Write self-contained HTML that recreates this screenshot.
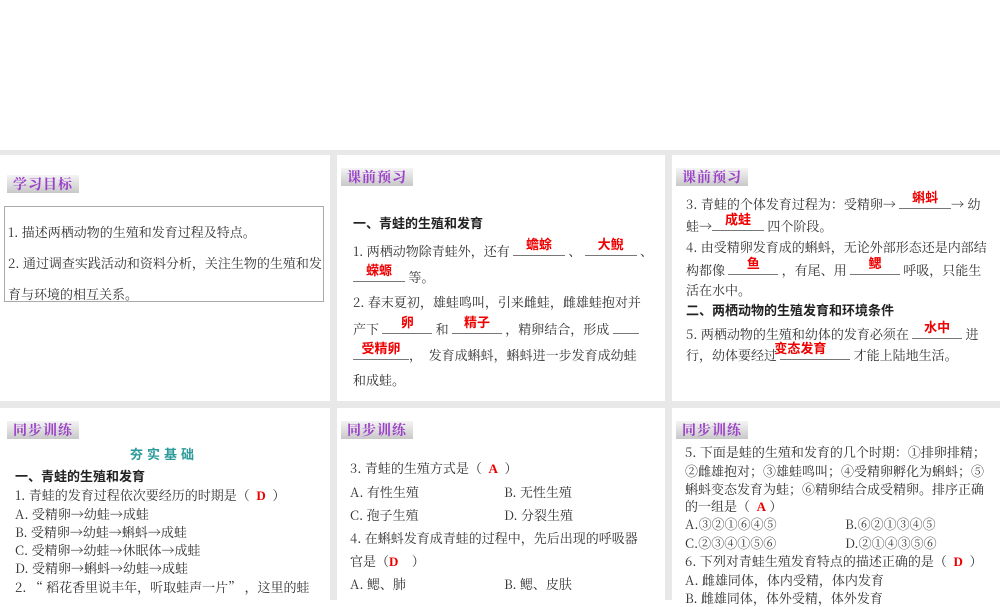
<!DOCTYPE html>
<html><head><meta charset="utf-8"><style>
*{margin:0;padding:0;box-sizing:border-box}
body{width:1000px;height:600px;overflow:hidden;background:#fff;position:relative;font-family:"Noto Serif CJK SC","Liberation Serif",serif;font-size:13px;color:#333}
.bg{position:absolute;left:0;top:150px;width:1000px;height:450px;background:#e8e8e8}
.p{position:absolute;background:#fff}
.lab{position:absolute;height:18px;padding:0 6px;line-height:18px;font-weight:bold;font-size:14px;color:#9b40c8;background:linear-gradient(#f4f4f4,#c8c8c8);font-family:"Noto Serif CJK SC",serif;letter-spacing:1px}
.l{position:absolute;white-space:pre;line-height:16px}
.h{font-family:"Liberation Sans","Noto Sans CJK SC",sans-serif;font-weight:bold;color:#222}
.b{display:inline-block;border-bottom:1px solid #777;position:relative;height:14px;vertical-align:baseline;text-align:center}
.a{position:absolute;left:0;right:0;top:-5px;color:#e00;font-family:"Liberation Sans","Noto Sans CJK SC",sans-serif;font-weight:bold;font-size:13px}
.r{color:#e00;font-weight:bold;font-family:"Liberation Serif",serif}
</style></head><body>
<div class="bg"></div>
<div class="p" style="left:0;top:155px;width:330px;height:246px"></div>
<div class="p" style="left:337px;top:155px;width:328px;height:246px"></div>
<div class="p" style="left:672px;top:155px;width:328px;height:246px"></div>
<div class="p" style="left:0;top:408px;width:330px;height:192px"></div>
<div class="p" style="left:337px;top:408px;width:328px;height:192px"></div>
<div class="p" style="left:672px;top:408px;width:328px;height:192px"></div>

<div class="lab" style="left:7px;top:175px">学习目标</div>
<div style="position:absolute;left:4px;top:206px;width:320px;height:96px;border:1px solid #aaa"></div>
<div class="l" style="left:8px;top:224px">1. 描述两栖动物的生殖和发育过程及特点。</div>
<div class="l" style="left:8px;top:255px">2. 通过调查实践活动和资料分析，关注生物的生殖和发</div>
<div class="l" style="left:8px;top:286px">育与环境的相互关系。</div>

<div class="lab" style="left:341px;top:168px">课前预习</div>
<div class="l h" style="left:353px;top:216px">一、青蛙的生殖和发育</div>
<div class="l" style="left:353px;top:242px">1. 两栖动物除青蛙外，还有 <span class="b" style="width:52px"><span class="a">蟾蜍</span></span> 、 <span class="b" style="width:52px"><span class="a">大鲵</span></span> 、</div>
<div class="l" style="left:353px;top:268px"><span class="b" style="width:52px"><span class="a">蝾螈</span></span> 等。</div>
<div class="l" style="left:353px;top:294px">2. 春末夏初，雄蛙鸣叫，引来雌蛙，雌雄蛙抱对并</div>
<div class="l" style="left:353px;top:320px">产下 <span class="b" style="width:50px"><span class="a">卵</span></span> 和 <span class="b" style="width:50px"><span class="a">精子</span></span> ，精卵结合，形成 <span class="b" style="width:26px"></span></div>
<div class="l" style="left:353px;top:346px"><span class="b" style="width:56px"><span class="a">受精卵</span></span>，  发育成蝌蚪，蝌蚪进一步发育成幼蛙</div>
<div class="l" style="left:353px;top:372px">和成蛙。</div>

<div class="lab" style="left:676px;top:168px">课前预习</div>
<div class="l" style="left:686px;top:195px">3. 青蛙的个体发育过程为：受精卵→ <span class="b" style="width:52px"><span class="a">蝌蚪</span></span>→ 幼</div>
<div class="l" style="left:686px;top:217px">蛙→<span class="b" style="width:52px"><span class="a">成蛙</span></span> 四个阶段。</div>
<div class="l" style="left:686px;top:239px">4. 由受精卵发育成的蝌蚪，无论外部形态还是内部结</div>
<div class="l" style="left:686px;top:261px">构都像 <span class="b" style="width:50px"><span class="a">鱼</span></span> ，有尾、用 <span class="b" style="width:50px"><span class="a">鳃</span></span> 呼吸，只能生</div>
<div class="l" style="left:686px;top:282px">活在水中。</div>
<div class="l h" style="left:686px;top:303px">二、两栖动物的生殖发育和环境条件</div>
<div class="l" style="left:686px;top:325px">5. 两栖动物的生殖和幼体的发育必须在 <span class="b" style="width:50px"><span class="a">水中</span></span> 进</div>
<div class="l" style="left:686px;top:346px">行，幼体要经过 <span class="b" style="width:70px"><span class="a" style="left:-30px">变态发育</span></span> 才能上陆地生活。</div>

<div class="lab" style="left:7px;top:421px">同步训练</div>
<div class="l h" style="left:130px;top:447px;color:#2a9a9a;letter-spacing:4px">夯实基础</div>
<div class="l h" style="left:15px;top:469px">一、青蛙的生殖和发育</div>
<div class="l" style="left:15px;top:487px">1. 青蛙的发育过程依次要经历的时期是（  <span class="r">D</span>  ）</div>
<div class="l" style="left:15px;top:506px">A. 受精卵→幼蛙→成蛙</div>
<div class="l" style="left:15px;top:524px">B. 受精卵→幼蛙→蝌蚪→成蛙</div>
<div class="l" style="left:15px;top:542px">C. 受精卵→幼蛙→休眠体→成蛙</div>
<div class="l" style="left:15px;top:560px">D. 受精卵→蝌蚪→幼蛙→成蛙</div>
<div class="l" style="left:15px;top:579px">2. “ 稻花香里说丰年，听取蛙声一片” ，这里的蛙</div>

<div class="lab" style="left:341px;top:421px">同步训练</div>
<div class="l" style="left:350px;top:460px">3. 青蛙的生殖方式是（  <span class="r">A</span>  ）</div>
<div class="l" style="left:350px;top:484px">A. 有性生殖</div><div class="l" style="left:504px;top:484px">B. 无性生殖</div>
<div class="l" style="left:350px;top:507px">C. 孢子生殖</div><div class="l" style="left:504px;top:507px">D. 分裂生殖</div>
<div class="l" style="left:350px;top:530px">4. 在蝌蚪发育成青蛙的过程中，先后出现的呼吸器</div>
<div class="l" style="left:350px;top:553px">官是（<span class="r">D</span>    ）</div>
<div class="l" style="left:350px;top:576px">A. 鳃、肺</div><div class="l" style="left:504px;top:576px">B. 鳃、皮肤</div>

<div class="lab" style="left:676px;top:421px">同步训练</div>
<div class="l" style="left:685px;top:444px">5. 下面是蛙的生殖和发育的几个时期：①排卵排精；</div>
<div class="l" style="left:685px;top:463px">②雌雄抱对；③雄蛙鸣叫；④受精卵孵化为蝌蚪；⑤</div>
<div class="l" style="left:685px;top:481px">蝌蚪变态发育为蛙；⑥精卵结合成受精卵。排序正确</div>
<div class="l" style="left:685px;top:498px">的一组是（  <span class="r">A</span> ）</div>
<div class="l" style="left:685px;top:516px">A.③②①⑥④⑤</div><div class="l" style="left:845px;top:516px">B.⑥②①③④⑤</div>
<div class="l" style="left:685px;top:535px">C.②③④①⑤⑥</div><div class="l" style="left:845px;top:535px">D.②①④③⑤⑥</div>
<div class="l" style="left:685px;top:553px">6. 下列对青蛙生殖发育特点的描述正确的是（  <span class="r">D</span>  ）</div>
<div class="l" style="left:685px;top:572px">A. 雌雄同体，体内受精，体内发育</div>
<div class="l" style="left:685px;top:590px">B. 雌雄同体，体外受精，体外发育</div>
</body></html>
